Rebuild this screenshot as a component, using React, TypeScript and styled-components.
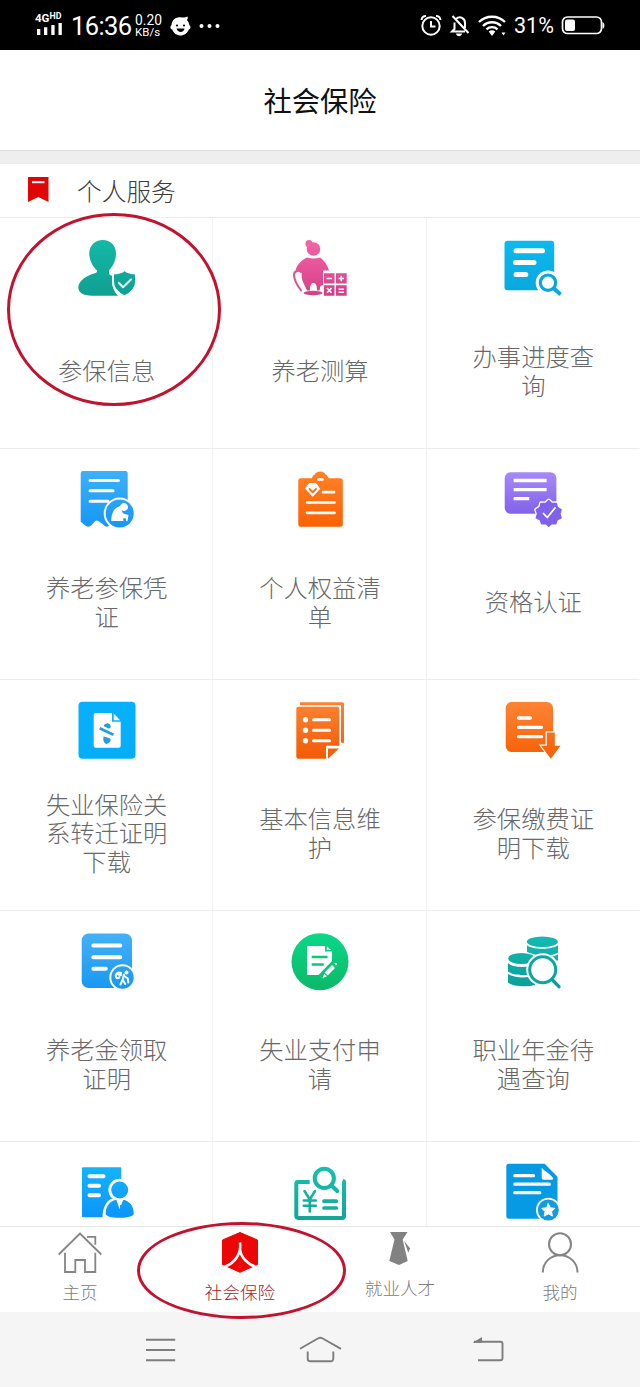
import React from 'react';
import styled, { createGlobalStyle } from 'styled-components';

const GlobalStyle = createGlobalStyle`
  * { box-sizing: border-box; }
  body {
    margin: 0;
    background: #fff;
    font-family: 'Noto Sans CJK SC', 'Noto Sans', sans-serif;
    font-weight: 300;
  }
  svg { display: block; flex-shrink: 0; }
`;

const Screen = styled.div`
  position: relative;
  display: flex;
  flex-direction: column;
  width: 640px;
  height: 1387px;
  overflow: hidden;
  background: #fff;
`;

/* ---------- status bar ---------- */

const StatusBar = styled.header`
  display: flex;
  justify-content: space-between;
  flex: 0 0 50px;
  padding: 0 35px;
  background: #000;
  color: #fff;
  font-family: Roboto, sans-serif;
  font-weight: 400;
`;

const StatusGroup = styled.div`
  display: flex;
  align-items: center;
  height: 50px;
  padding-top: 1px;
`;

const Signal = styled.div`
  display: flex;
  flex-direction: column;
  width: 30px;
  margin-bottom: 4px;
`;

const Network = styled.div`
  display: flex;
  align-items: flex-start;
  font-size: 11.5px;
  font-weight: 700;
  line-height: 10px;
`;

const Hd = styled.span`
  font-size: 8.8px;
  line-height: 7px;
`;

const Clock = styled.span`
  flex-shrink: 0;
  width: 69px;
  padding: 1px 0 0 6px;
  font-size: 25.5px;
  line-height: 30px;
  letter-spacing: -0.6px;
`;

const Speed = styled.div`
  display: flex;
  flex-direction: column;
  width: 36px;
  padding-left: 1px;
  font-size: 13.8px;
  line-height: 12px;
`;

const SpeedUnit = styled.span`
  font-size: 11.5px;
  line-height: 12px;
`;

const Percent = styled.span`
  width: 53px;
  padding-left: 6px;
  font-size: 21.5px;
`;

/* ---------- titles ---------- */

const TitleBar = styled.h1`
  display: flex;
  align-items: center;
  justify-content: center;
  flex: 0 0 101px;
  margin: 0;
  padding-bottom: 1px;
  border-bottom: 1px solid #dedede;
  color: #111;
  font-size: 28.3px;
  font-weight: 400;
`;

const Gap = styled.div`
  flex: 0 0 13px;
  background: #eee;
`;

const SectionTitle = styled.h2`
  display: flex;
  align-items: center;
  gap: 28px;
  flex: 0 0 54px;
  margin: 0;
  padding: 0 0 2px 28px;
  border-bottom: 1px solid #ececec;
  color: #3c3c3c;
  font-size: 24.7px;
  font-weight: 300;
`;

/* ---------- services grid ---------- */

const Services = styled.main`
  display: grid;
  grid-template-columns: repeat(3, 1fr);
  grid-auto-rows: 231px;
  flex: 1 1 0;
  min-height: 0;
  overflow: hidden;
`;

const Service = styled.div`
  display: flex;
  flex-direction: column;
  align-items: center;
  padding: 19px 0 0 1px;
  border-bottom: 1px solid #ececec;
  border-right: 1px solid #f2f2f2;
  &:nth-child(3n) { border-right-color: transparent; }
`;

const ServiceLabel = styled.div`
  display: flex;
  align-items: center;
  justify-content: center;
  width: 124px;
  height: 139px;
  color: #686868;
  font-size: 24.3px;
  line-height: 28.6px;
  text-align: center;
  word-break: break-all;
`;

/* ---------- bottom bars ---------- */

const TabBar = styled.nav`
  display: grid;
  grid-template-columns: repeat(4, 1fr);
  flex: 0 0 86px;
  border-top: 1px solid #e6e6e6;
  background: #fff;
`;

const Tab = styled.div<{ $active?: boolean }>`
  display: flex;
  flex-direction: column;
  align-items: center;
  gap: 5px;
  padding-top: 4px;
  color: ${p => (p.$active ? '#a52020' : '#7c7c7c')};
  font-size: 17.6px;
  line-height: 24px;
`;

const NavBar = styled.div`
  display: grid;
  grid-template-columns: repeat(3, 160px);
  align-items: center;
  justify-content: center;
  justify-items: center;
  flex: 0 0 75px;
  background: #f5f5f5;
`;

const Highlight = styled.div<{ $x: number; $y: number; $w: number; $h: number }>`
  position: absolute;
  left: ${p => p.$x}px;
  top: ${p => p.$y}px;
  width: ${p => p.$w}px;
  height: ${p => p.$h}px;
  border: 3px solid #c1122f;
  border-radius: 50%;
`;

/* ---------- service icons, all on a 64 x 64 grid ---------- */

type IconProps = { id: string; from: string; to: string; children: React.ReactNode };

const ServiceIcon = ({ id, from, to, children }: IconProps) => (
  <svg width="64" height="64" viewBox="0 0 64 64" fill="none" strokeLinecap="round" strokeLinejoin="round">
    <defs>
      <linearGradient id={id} gradientUnits="userSpaceOnUse" x1="0" y1="3" x2="0" y2="60">
        <stop offset="0" stopColor={from} />
        <stop offset="1" stopColor={to} />
      </linearGradient>
    </defs>
    {children}
  </svg>
);

const InsuredIcon = () => (
  <ServiceIcon id="insured" from="#14b8a6" to="#109f92">
    <path fill="url(#insured)" d="M27.700 3C35.500 3 41 8.500 41 16.500c0 7.500-3.500 13-7 17v2.500c0 1.500 1 2 3 2.800V44c0 6 2.500 11 6 14.700H17C8.500 58.700 3.300 55.500 3.300 50.500 3.300 43.500 12 38.500 20.500 36c1.500-.5 1.500-1 1.500-2.500-4-4-7.700-9.500-7.700-17C14.300 8.500 20 3 27.700 3z" />
    <path fill="url(#insured)" stroke="#fff" strokeWidth="2" d="M49.500 33c3 2.500 7 3.500 11.500 3.500V45c0 6.500-4.500 11-11.500 14.500C42.500 56 38 51.500 38 45v-8.500c4.500 0 8.500-1 11.500-3.500z" />
    <path stroke="#e8fffb" strokeWidth="2" d="M44 46l4 4.200 8-7.700" />
  </ServiceIcon>
);

const PensionCalcIcon = () => (
  <ServiceIcon id="calc" from="#f564a9" to="#d33f84">
    <g fill="url(#calc)">
      <circle cx="21" cy="6.700" r="3.600" />
      <ellipse cx="25.500" cy="12" rx="6.800" ry="6.700" />
      <path d="M19 20.500c4 1.200 9 1.200 13 0 4.500 3 7.500 8 9 13H35v14.500l-2.500 1-1 4.500h-2.500c0-5-1-7.500-3.500-7.500s-3.500 2.500-3.500 7.500h-3L15 45c-1.300-3-1.500-6-1.300-10l-6.200-2C9 28 13.500 23 19 20.500z" />
      <ellipse cx="25" cy="56" rx="9.500" ry="2.200" />
      <path d="M36 36.300h10.500v10.200H36zM48 36.300h10.700v10.200H48zM36 48.300h10.500v10.400H36zM48 48.300h10.700v10.400H48z" />
    </g>
    <path stroke="#dc5190" strokeWidth="2" d="M13 35c-3-2.500-7-.5-7 3 0 4 3 10 7 15.500" />
    <path stroke="#fff" strokeWidth="1.600" strokeLinecap="butt" d="M38.500 41.500H44M50.500 41.500h5.500M53.300 38.700v5.500M39 51l4.500 4.800M43.500 51L39 55.800M50.500 52.300H56M50.500 55.300H56" />
  </ServiceIcon>
);

const ProgressIcon = () => (
  <ServiceIcon id="progress" from="#0cb9ee" to="#0aa6dc">
    <rect x="3.500" y="3.700" width="49.700" height="49.500" rx="3" fill="url(#progress)" />
    <path stroke="#fff" strokeWidth="5" d="M15 13.800h26.500M14.500 25.500h18.500M15 37.500h9.800" />
    <circle cx="47" cy="45.700" r="12.300" fill="#fff" />
    <path stroke="#fff" strokeWidth="8" strokeLinecap="butt" d="M52 51l7 6" />
    <circle cx="47" cy="45.700" r="7.700" stroke="#0aa6dc" strokeWidth="3.200" />
    <path stroke="#0aa6dc" strokeWidth="3.800" strokeLinecap="butt" d="M53 51.500l6.500 6" />
  </ServiceIcon>
);

const VoucherIcon = () => (
  <ServiceIcon id="voucher" from="#3cb0fb" to="#1597f4">
    <path fill="url(#voucher)" d="M8 3h42.700a2 2 0 012 2v48.500L47 58l-7-4-8 4.700c-1.500 0-3-1-4-2.500L24 53.500c-1.500-1.500-3-1.500-4.500.2L17 56.500c-1.500 2-4 3-6 1.500l-5.300-4.300V5A2.200 2.200 0 018 3z" />
    <path stroke="#fff" strokeWidth="3" d="M15 12.500h28.500M15 22.700h23M15 33.200h18" />
    <circle cx="44.700" cy="45.500" r="16" fill="#fff" />
    <circle cx="44.700" cy="45.500" r="14" fill="url(#voucher)" />
    <path fill="#fff" d="M44.500 38.500l2.500-3c3-1.300 6 .8 6 3.700 0 3-4 5-6.500 2.800 1 2 1 3.500 3 4l4 1-1 6h-1.300l-.7-3-2.500.5.500 2.500H36.300c0-6.500 2.200-13.500 8.200-14.500z" />
  </ServiceIcon>
);

const RightsListIcon = () => (
  <ServiceIcon id="rights" from="#ff8126" to="#fa6104">
    <path fill="url(#rights)" d="M12.800 10.300H23.500c1-.4 1-3 3.200-3.800 2-4 9-4 11 0 2.200.8 2.200 3.400 3.200 3.800h11.400a2.500 2.500 0 012.500 2.500v43.400a2.500 2.500 0 01-2.500 2.500H12.800a2.500 2.500 0 01-2.500-2.500V12.800a2.500 2.500 0 012.500-2.500z" />
    <path stroke="#fff" strokeWidth="2.700" d="M30.500 11.500h4M35 24.200h11M19 34.500h27.500M19 44.800h27.500" />
    <path fill="#fff" d="M21.500 15.500h6.500l3.700 5.300-7 7.500-7-7.500z" stroke="#fff" />
    <path stroke="#fa7420" strokeWidth="2" d="M21.500 21l3.200 3.200 3.200-3.200" />
  </ServiceIcon>
);

const CertifyIcon = () => (
  <ServiceIcon id="certify" from="#a78bf8" to="#7554e6">
    <rect x="3.700" y="4.300" width="51.700" height="41.500" rx="6" fill="url(#certify)" />
    <path stroke="#fff" strokeWidth="3.300" strokeLinecap="square" d="M14.300 12.500h29.700M14.300 21.700h29.700M14.300 30.700h12.300" />
    <path stroke="#fff" strokeWidth="4" d="M47.700 32.500l3.200 2.900 4.400-.1 1.200 4.100 3.700 2.300-1.300 4.100 1.300 4.100-4 1.900-1.400 4.100-4.200-.4-2.900 2.800-2.900-2.800-4.200.4-1.400-4.100-4-1.900 1.300-4.100-1.300-4.100 3.700-2.300 1.200-4.100 4.400.1z" />
    <path fill="#8061ea" stroke="#8061ea" strokeWidth="1.300" d="M47.700 32.500l3.200 2.900 4.400-.1 1.200 4.100 3.700 2.300-1.300 4.100 1.300 4.100-4 1.900-1.400 4.100-4.200-.4-2.900 2.800-2.900-2.800-4.200.4-1.400-4.100-4-1.900 1.300-4.100-1.300-4.100 3.700-2.300 1.200-4.100 4.400.1z" />
    <path stroke="#fff" strokeWidth="1.800" d="M42.500 45.500l3.700 4 7.800-9.500" />
  </ServiceIcon>
);

const TransferIcon = () => (
  <ServiceIcon id="transfer" from="#06b0fb" to="#06aef8">
    <rect x="3.500" y="2.800" width="57" height="57" rx="4" fill="url(#transfer)" />
    <path fill="#fff" d="M20.700 14H37v8.700h8.700v24a2 2 0 01-2 2h-23a2 2 0 01-2-2V16a2 2 0 012-2zM38.700 14.500l6.500 6.700h-6.500z" />
    <g fill="#239fe0">
      <path d="M28.700 27c1-3.500 6-4 7 0 .3 2-1 2.800-3 2.200zM28.500 37.500l5.500 1.500 1.500 1c.5 3-2 4.300-3.800 5-2-.8-4-2-3.200-7.500z" />
    </g>
    <path stroke="#239fe0" strokeWidth="2.700" strokeLinecap="butt" d="M24.700 29.300l13.800 6.500" />
  </ServiceIcon>
);

const ProfileIcon = () => (
  <ServiceIcon id="profile" from="#fb8332" to="#f45a05">
    <path stroke="url(#profile)" strokeWidth="3" strokeLinecap="butt" d="M12 4.800h42.500v39" />
    <path fill="url(#profile)" d="M10.300 7.700h39a2 2 0 012 2v37H38v13H10.300a2 2 0 01-2-2v-48a2 2 0 012-2zM40 49.500h11L40 59.800z" />
    <path stroke="#fff" strokeWidth="3" d="M25.500 20.700h16M25.500 31.300h16M25.500 41.700h16" />
    <g fill="#fff">
      <circle cx="17.500" cy="20.700" r="2.700" />
      <circle cx="17.500" cy="31.300" r="2.700" />
      <circle cx="17.500" cy="41.700" r="2.700" />
    </g>
  </ServiceIcon>
);

const PaymentProofIcon = () => (
  <ServiceIcon id="payment" from="#fd8434" to="#f65f06">
    <rect x="4.700" y="3" width="47.300" height="50" rx="6" fill="url(#payment)" />
    <path stroke="#fff" strokeWidth="3.300" d="M17.500 19h12M17.500 28.300h23M17.500 37.700h23" />
    <path stroke="#fff" strokeWidth="2.400" strokeLinejoin="miter" d="M45.800 33.500h8v13.200h5.700l-9.700 13-9.700-13h5.700z" />
    <path fill="url(#payment)" d="M45.800 33.500h8v13.200h5.700l-9.700 13-9.700-13h5.700z" />
  </ServiceIcon>
);

const PensionProofIcon = () => (
  <ServiceIcon id="pension" from="#43b1f8" to="#1797f0">
    <rect x="6.700" y="3.500" width="50.300" height="54.500" rx="7" fill="url(#pension)" />
    <path stroke="#fff" strokeWidth="4" d="M18.300 15.500h27M18.300 27.200h27M18.300 38.800h12.500" />
    <circle cx="47.500" cy="47.500" r="13.200" fill="#fff" />
    <circle cx="47.500" cy="47.500" r="11.200" fill="url(#pension)" />
    <circle cx="51.500" cy="42.500" r="2" fill="#fff" />
    <path stroke="#fff" strokeWidth="2" d="M46 43c-3-1.500-6 1-5 4 1 2 3 1.500 3.500 0M43 44.500l3 .5M49 44.500l-1.500 5.500-2 4.500M47.800 50l2.500 4M49.300 46l3.500 2.500.5 4" />
  </ServiceIcon>
);

const JoblessPayIcon = () => (
  <ServiceIcon id="jobless" from="#0bd889" to="#0cb868">
    <circle cx="32" cy="31.700" r="28.500" fill="url(#jobless)" />
    <path fill="#fff" d="M20 16h17v5.500h7v9.500L30.500 45H20a1 1 0 01-1-1V17a1 1 0 011-1zM38.800 16.500l4.500 3.500h-4.500z" />
    <path stroke="#0fc676" strokeWidth="2.700" strokeLinecap="butt" d="M23.700 27h15.800M23.700 34.500h12" />
    <path stroke="#0fc676" strokeWidth="6.500" strokeLinecap="butt" d="M48.500 33.500L33 48" />
    <path stroke="#fff" strokeWidth="4" strokeLinecap="butt" d="M45.500 36.500l-7.300 7.500" />
    <path fill="#fff" d="M46.300 33.500l1.200-.8c1-.3 2 .8 1.500 1.800l-.9 1zM36.300 43.800l2.500 2.500-4.300 2z" />
  </ServiceIcon>
);

const AnnuityIcon = () => (
  <ServiceIcon id="annuity" from="#13bcb4" to="#0c9d98">
    <g fill="url(#annuity)">
      <ellipse cx="41.300" cy="11.700" rx="15.500" ry="5.300" />
      <path d="M26 15c4 5 26 5 31 0v7.500c-5 4-20 4.500-31-.5zM26 25c8 4 23 4 31-.5v6H26z" />
      <ellipse cx="20.500" cy="28.500" rx="13.300" ry="5.500" />
      <path d="M7 33c5 5 20 5 27 1v9c-8 3.500-22 2.500-27-1.500zM7 44c6 4 19 4.500 27 1.500v9.500c-8 2-21 2-27-2.500z" />
    </g>
    <circle cx="41.700" cy="39.700" r="16.500" fill="#fff" />
    <circle cx="41.700" cy="39.700" r="13" stroke="#0ea5a0" strokeWidth="3" />
    <path stroke="#0c9d98" strokeWidth="3.300" d="M51.500 50l6.500 6.700" />
  </ServiceIcon>
);

const AgentIcon = () => (
  <ServiceIcon id="agent" from="#14b6fa" to="#0d92fa">
    <rect x="7" y="6.300" width="39.300" height="50" rx="1" fill="url(#agent)" />
    <path stroke="#fff" strokeWidth="4" d="M14.500 15.300h14M14.500 24.700h9.500M14.500 34.300h9.500" />
    <circle cx="44.700" cy="29" r="11.300" fill="#fff" />
    <path fill="#fff" d="M38 36h14v8H38zM27.500 57C27.500 45 32 38 40 37l5 5v15z" />
    <circle cx="44.700" cy="29" r="8.500" fill="url(#agent)" />
    <path fill="url(#agent)" d="M38.500 39.500c1.500-.7 2-.7 3-.3l3.200 9 3.300-9c1-.4 2-.3 3 .3 5 2.300 7.700 7 7.700 13 0 2.500-5 4.300-14 4.300s-14-1.500-14-4.300c0-6 3-10.800 7.800-13z" />
  </ServiceIcon>
);

const FeeQueryIcon = () => (
  <ServiceIcon id="fee" from="#17c2b0" to="#12a597">
    <path stroke="url(#fee)" strokeWidth="4" strokeLinecap="butt" d="M21.700 21H10a1.700 1.700 0 00-1.700 1.700v32.500A1.700 1.700 0 0010 57h44.300a1.700 1.700 0 001.700-1.700V20.500l-1.500-.5" />
    <circle cx="36.300" cy="17.300" r="9.600" stroke="url(#fee)" strokeWidth="4" />
    <path stroke="url(#fee)" strokeWidth="4" d="M43.500 24.500l5.700 5.500" />
    <path stroke="#14b0a0" strokeWidth="3.700" d="M36 40.200h12.300M36 47h12.300" />
    <path stroke="url(#fee)" strokeWidth="2.600" d="M16.500 30l5.300 8.500L27 30M21.800 38.500v12M15.800 39.500h12M15.800 44.700h12" />
  </ServiceIcon>
);

const FavouriteIcon = () => (
  <ServiceIcon id="favourite" from="#069ae5" to="#069ae5">
    <path fill="url(#favourite)" d="M8 2.700h35.700l12.800 13V55a2.700 2.700 0 01-2.700 2.700H8A2.700 2.700 0 015.300 55V5.400A2.700 2.700 0 018 2.700z" />
    <path fill="#fff" d="M40.700 6.700c4.500 5 7.500 5 11.300 10.300.5.700 0 1.700-1 1.700h-8.300a2 2 0 01-2-2z" />
    <path stroke="#fff" strokeWidth="3.300" d="M13.800 14.700h18.700M13.800 23.200h34.500M13.800 31.700h25" />
    <circle cx="47.300" cy="49" r="12.300" fill="#fff" />
    <circle cx="47.300" cy="49" r="10.500" fill="#139be0" />
    <path fill="#fff" stroke="#fff" strokeWidth="1" d="M47.300 42.700l2 4.100 4.500.6-3.200 3.200.8 4.500-4.100-2.200-4.100 2.200.8-4.500-3.200-3.200 4.500-.6z" />
  </ServiceIcon>
);

const services: { label?: string; Icon: React.ComponentType }[] = [
  { label: '参保信息', Icon: InsuredIcon },
  { label: '养老测算', Icon: PensionCalcIcon },
  { label: '办事进度查询', Icon: ProgressIcon },
  { label: '养老参保凭证', Icon: VoucherIcon },
  { label: '个人权益清单', Icon: RightsListIcon },
  { label: '资格认证', Icon: CertifyIcon },
  { label: '失业保险关系转迁证明下载', Icon: TransferIcon },
  { label: '基本信息维护', Icon: ProfileIcon },
  { label: '参保缴费证明下载', Icon: PaymentProofIcon },
  { label: '养老金领取证明', Icon: PensionProofIcon },
  { label: '失业支付申请', Icon: JoblessPayIcon },
  { label: '职业年金待遇查询', Icon: AnnuityIcon },
  { Icon: AgentIcon },
  { Icon: FeeQueryIcon },
  { Icon: FavouriteIcon },
];

export default function App() {
  return (
    <Screen>
      <GlobalStyle />
      <StatusBar>
        <StatusGroup>
          <Signal>
            <Network>4G<Hd>HD</Hd></Network>
            <svg width="28" height="12" viewBox="0 0 28 12" fill="#fff">
              <path d="M2 6h3.300v6H2zM9 4.200h3.300V12H9zM16.300 2h3.300v10h-3.300zM23.500 0h3.300v12h-3.300z" />
            </svg>
          </Signal>
          <Clock>16:36</Clock>
          <Speed>
            <span>0.20</span>
            <SpeedUnit>KB/s</SpeedUnit>
          </Speed>
          <svg width="60" height="24" viewBox="0 0 60 24">
            <path fill="#fff" d="M17.500 2.500c.5 1.500.5 2.700-.7 3.500 1.700 1.500 2.300 3.500 2.500 5 1.700 1 1.500 4-.5 4.500-1.300 3.700-4.700 6-8.300 6s-7-2.300-8.300-6c-2.200-.5-2.300-3.500-.7-4.500C2 5.500 6 2.800 10.500 3.200c2.500.3 5 .5 7-.7z" />
            <circle cx="7" cy="11.500" r="1.100" />
            <circle cx="14" cy="11.500" r="1.100" />
            <path d="M6.500 14.500h8c-.5 4.500-7 4.500-8 0z" />
            <g fill="#fff">
              <circle cx="31.500" cy="12" r="2" />
              <circle cx="39.500" cy="12" r="2" />
              <circle cx="47.500" cy="12" r="2" />
            </g>
          </svg>
        </StatusGroup>
        <StatusGroup>
          <svg width="88" height="24" viewBox="0 0 88 24" fill="none" stroke="#fff" strokeWidth="2">
            <circle cx="11" cy="12" r="8.700" />
            <path d="M11 7v5.500h4.500M1.500 6C1.800 3.500 3.500 2 6 2M20.500 6C20.200 3.500 18.500 2 16 2" />
            <path d="M32.500 2l16 17M34.500 8.500v6.500l-2.500 2.500h13M36 5c4-3.500 9-1 9 4v5" />
            <path fill="#fff" stroke="none" d="M36 19.500h6c-.5 3.500-5.500 3.500-6 0z" />
            <path strokeWidth="2.300" d="M59 8c7-7 19-7 26 0M63 12c5-5 13-5 18 0M66.500 15.300c3-2.800 8-2.800 11 0" />
            <path fill="#fff" stroke="none" d="M68.700 17.500c2-1.800 4.600-1.800 6.600 0L72 22zM81.500 18.500h4l-2 3z" />
          </svg>
          <Percent>31%</Percent>
          <svg width="44" height="20" viewBox="0 0 44 20">
            <rect x="1.500" y="1" width="39" height="16.500" rx="5" fill="none" stroke="#fff" strokeWidth="1.700" />
            <rect x="4" y="3.500" width="10" height="11.500" rx="2" fill="#fff" />
            <path d="M41.500 6.200c2.500 0 2.500 6.500 0 6.500z" fill="#fff" />
          </svg>
        </StatusGroup>
      </StatusBar>

      <TitleBar>社会保险</TitleBar>
      <Gap />
      <SectionTitle>
        <svg width="21" height="26" viewBox="0 0 21 26">
          <path fill="#e10505" d="M0 0h20.500v25L10.300 20 0 25z" />
          <path fill="#fff" d="M4 4.200h12.500v2H4z" />
        </svg>
        个人服务
      </SectionTitle>

      <Services>
        {services.map(({ label, Icon }, i) => (
          <Service key={i}>
            <Icon />
            {label && <ServiceLabel>{label}</ServiceLabel>}
          </Service>
        ))}
      </Services>

      <TabBar>
        <Tab>
          <svg width="44" height="44" viewBox="0 0 44 44" fill="none" stroke="#858585" strokeWidth="1.800">
            <path d="M.7 23.500L22 2.500l21.300 21M29 5.800h8.300v8M7 21.700V41h10.300V29H27v12h10.300V21.700" />
          </svg>
          主页
        </Tab>
        <Tab $active>
          <svg width="44" height="44" viewBox="0 0 44 44" fill="none">
            <path fill="#ec0606" stroke="#ec0606" strokeLinejoin="round" d="M22 1.500l17.500 7.500v24.500L22 41.300 4.500 33.500V9z" />
            <path stroke="#fff" strokeWidth="2.600" d="M22 11.500c1 6-.5 10.500-3 14.500-3 5-7.500 8-12.500 9.800M22 17c0 5 2 9 5.500 12.500 3 3 6 5 10 6.300" />
          </svg>
          社会保险
        </Tab>
        <Tab>
          <svg width="44" height="40" viewBox="0 0 44 40" fill="#828282">
            <path d="M12 1h17.500l-4.800 7.500 5 21.500L21 34l-9.700-4 5.200-21.500z" />
            <path d="M26.200 10l6 7.500-2 4z" />
          </svg>
          就业人才
        </Tab>
        <Tab>
          <svg width="44" height="44" viewBox="0 0 44 44" fill="none" stroke="#858585" strokeWidth="2">
            <circle cx="22" cy="13.300" r="11" />
            <path d="M4.800 41.500c0-10 7.500-17.200 17.200-17.200s17.500 7.200 17.500 17.200" />
          </svg>
          我的
        </Tab>
      </TabBar>

      <NavBar>
        <svg width="56" height="32" viewBox="0 0 56 32" fill="none" stroke="#7d7d7d" strokeWidth="1.900">
          <path d="M14 5.800h29.200M14 16h29.200M14 26.200h29.200" />
        </svg>
        <svg width="56" height="32" viewBox="0 0 56 32" fill="none" stroke="#7d7d7d" strokeWidth="1.900">
          <path d="M8 14.800L26.300 4.300c1.300-.8 2.700-.8 4 0L49 14.800M15.700 17.500v7.300a2.500 2.500 0 002.500 2.500h20.600a2.500 2.500 0 002.500-2.500v-7.300" />
        </svg>
        <svg width="56" height="32" viewBox="0 0 56 32" fill="none" stroke="#7d7d7d" strokeWidth="1.900">
          <path d="M22 7.800h26.500a2 2 0 012 2v14.500a2 2 0 01-2 2H26" />
          <path fill="#7d7d7d" stroke="none" d="M20.700 8.700L30 3v5.700z" />
        </svg>
      </NavBar>

      <Highlight $x={6.5} $y={212.5} $w={214} $h={193} />
      <Highlight $x={137} $y={1222} $w={209} $h={96.5} />
    </Screen>
  );
}
